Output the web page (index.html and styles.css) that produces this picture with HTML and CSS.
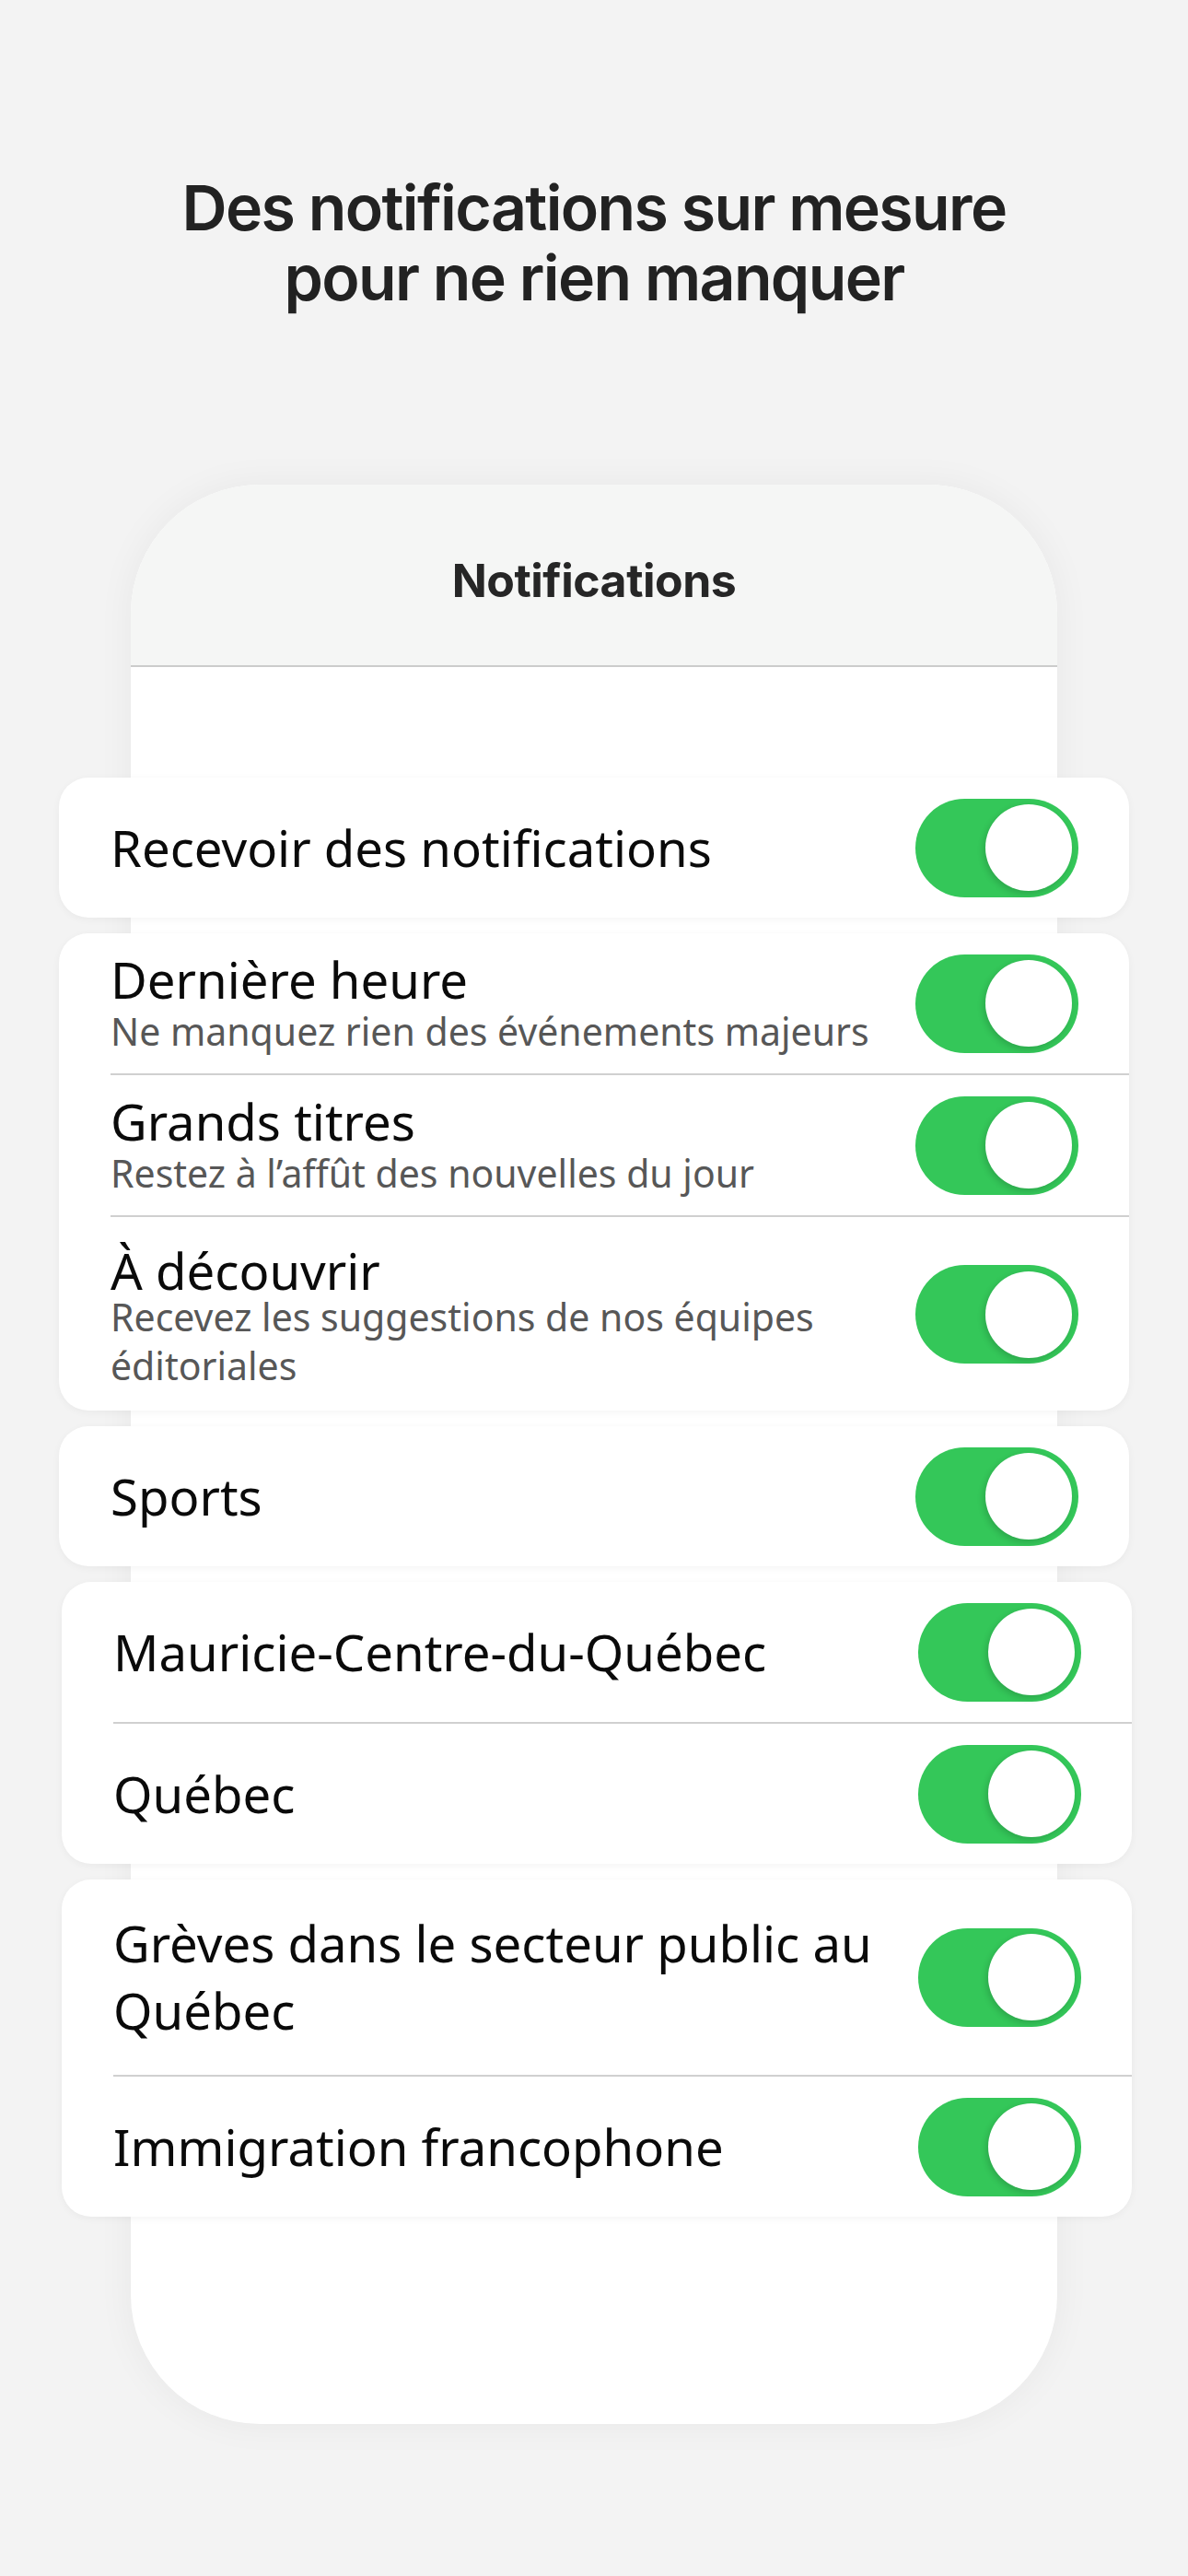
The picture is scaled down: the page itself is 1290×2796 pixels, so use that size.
FILE: index.html
```html
<!DOCTYPE html>
<html lang="fr">
<head>
    <meta charset="UTF-8">
    <meta name="viewport" content="width=device-width, initial-scale=1.0">
    <title>Notifications</title>
    <link rel="stylesheet" href="styles.css">
</head>
<body>
    <h1 class="intro">Des notifications sur mesure<br>pour ne rien manquer</h1>

    <div class="phone">
        <div class="phoneHeader">Notifications</div>

        <div class="list">
            <div class="card">
                <div class="row">
                    <div class="label"><span class="title">Recevoir des notifications</span></div>
                    <span class="toggle"><span class="knob"></span></span>
                </div>
            </div>

            <div class="card">
                <div class="row">
                    <div class="label">
                        <span class="title stacked">Dernière heure</span>
                        <span class="sub">Ne manquez rien des événements majeurs</span>
                    </div>
                    <span class="toggle"><span class="knob"></span></span>
                </div>
                <div class="row bt">
                    <div class="label">
                        <span class="title stacked">Grands titres</span>
                        <span class="sub">Restez à l’affût des nouvelles du jour</span>
                    </div>
                    <span class="toggle"><span class="knob"></span></span>
                </div>
                <div class="row bt tall">
                    <div class="label">
                        <span class="title tight">À découvrir</span>
                        <span class="sub">Recevez les suggestions de nos équipes éditoriales</span>
                    </div>
                    <span class="toggle"><span class="knob"></span></span>
                </div>
            </div>

            <div class="card">
                <div class="row">
                    <div class="label"><span class="title">Sports</span></div>
                    <span class="toggle"><span class="knob"></span></span>
                </div>
            </div>

            <div class="card shifted">
                <div class="row">
                    <div class="label"><span class="title">Mauricie-Centre-du-Québec</span></div>
                    <span class="toggle"><span class="knob"></span></span>
                </div>
                <div class="row bt">
                    <div class="label"><span class="title">Québec</span></div>
                    <span class="toggle"><span class="knob"></span></span>
                </div>
            </div>

            <div class="card shifted">
                <div class="row wrap">
                    <div class="label"><span class="title">Grèves dans le secteur public au Québec</span></div>
                    <span class="toggle"><span class="knob"></span></span>
                </div>
                <div class="row bt">
                    <div class="label"><span class="title">Immigration francophone</span></div>
                    <span class="toggle"><span class="knob"></span></span>
                </div>
            </div>
        </div>
    </div>
</body>
</html>
```

FILE: styles.css
```css
*{
    margin: 0;
    padding: 0;
    box-sizing: border-box;
}

body{
    background-color: #f3f3f3;
    font-family: "Noto Sans", "Open Sans", sans-serif;
    padding-bottom: 163px;
}

.intro{
    margin-top: 187px;
    font-family: Inter, "Liberation Sans", sans-serif;
    font-weight: 600;
    font-size: 68px;
    line-height: 76px;
    letter-spacing: -1.65px;
    color: #222;
    text-align: center;
}

.phone{
    width: 1006px;
    margin: 187px 0 0 142px;
    background: #fff;
    border-radius: 140px;
    box-shadow: 0 0 40px rgba(0, 0, 0, 0.05);
    padding-bottom: 225px;
}

.phoneHeader{
    height: 198px;
    padding-top: 74px;
    background: #f5f6f5;
    border-bottom: 2px solid #cccccc;
    border-radius: 140px 140px 0 0;
    font-family: Inter, "Liberation Sans", sans-serif;
    font-weight: 700;
    font-size: 50px;
    line-height: 60px;
    letter-spacing: -0.5px;
    color: #262626;
    text-align: center;
}

.list{
    margin: 120px -78px 0;
    display: flex;
    flex-direction: column;
    gap: 17px;
}

.card{
    background: #fff;
    border-radius: 32px;
    box-shadow: 0 2px 8px rgba(0, 0, 0, 0.045);
    overflow: hidden;
}

.card.shifted{
    margin-left: 3px;
    margin-right: -3px;
}

.row{
    display: flex;
    align-items: center;
    min-height: 152px;
    padding: 0 55px 0 56px;
    gap: 28px;
}

/* divider starts under the text, not at the card edge */
.row.bt{
    min-height: 154px;
    margin-left: 56px;
    padding-left: 0;
    border-top: 2px solid #d0d0d0;
}

.row.tall{
    min-height: 211px;
    padding-top: 34px;
    padding-bottom: 22px;
    align-items: flex-start;
}

.row.tall .toggle{
    margin-top: 18px;
}

.row.wrap{
    padding-top: 33px;
    padding-bottom: 33px;
}

.label{
    flex: 1;
    display: flex;
    flex-direction: column;
}

.title{
    font-size: 54.5px;
    line-height: 73px;
    color: #0a0a0a;
}

.title.stacked{
    line-height: 60px;
}

.title.tight{
    line-height: 48px;
}

.sub{
    font-size: 41px;
    line-height: 53px;
    color: #575757;
}

.toggle{
    flex: none;
    width: 177px;
    height: 107px;
    border-radius: 54px;
    background: #34c759;
    display: flex;
    align-items: center;
    justify-content: flex-end;
    padding: 0 7px;
}

.knob{
    width: 94px;
    height: 94px;
    border-radius: 50%;
    background: #fff;
    box-shadow: -2px 3px 7px rgba(0, 0, 0, 0.16);
}
```
